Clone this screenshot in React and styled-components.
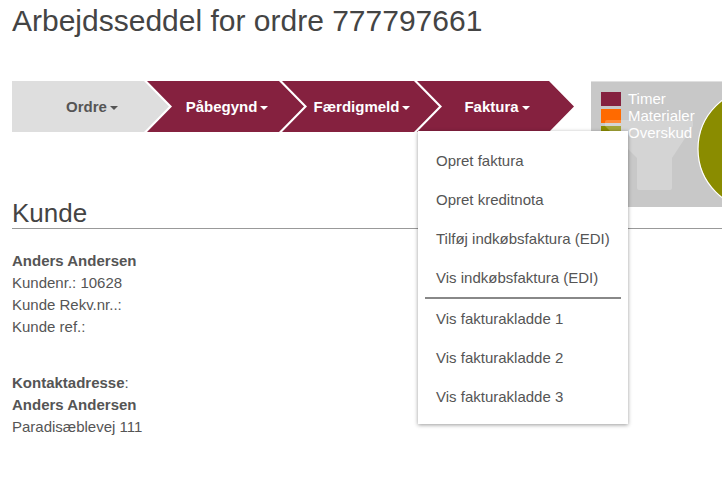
import styled, { createGlobalStyle } from 'styled-components';

const GlobalStyle = createGlobalStyle`
  html, body {
    margin: 0;
    padding: 0;
    overflow: hidden;
    background: #fff;
  }
  body {
    font-family: 'Liberation Sans', Arial, sans-serif;
    color: #555;
  }
`;

const Page = styled.div`
  padding: 4px 0 40px 12px;
`;

const Title = styled.h1`
  margin: 0;
  font-size: 30px;
  line-height: 34px;
  font-weight: normal;
  color: #444;
`;

const ProcessRow = styled.div`
  display: flex;
  align-items: flex-start;
  height: 51px;
  margin-top: 43px;
`;

const Steps = styled.div`
  display: flex;
  flex-shrink: 0;
`;

const StepItem = styled.div`
  position: relative;
  margin-left: ${(p) => (p.$first ? 0 : -25)}px;
`;

const StepShape = styled.div`
  width: 160px;
  height: 51px;
  display: flex;
  align-items: center;
  justify-content: center;
  gap: 3px;
  font-size: 15px;
  font-weight: bold;
  background: ${(p) => (p.$active ? '#85213f' : '#dedede')};
  color: ${(p) => (p.$active ? '#fff' : '#555')};
  clip-path: ${(p) =>
    p.$first
      ? 'polygon(0 0, calc(100% - 28px) 0, calc(100% - 3px) 50%, calc(100% - 28px) 100%, 0 100%)'
      : 'polygon(0 0, calc(100% - 28px) 0, calc(100% - 3px) 50%, calc(100% - 28px) 100%, 0 100%, 25px 50%)'};
`;

const Caret = styled.span`
  display: inline-block;
  width: 0;
  height: 0;
  margin-top: 2px;
  border-left: 4px solid transparent;
  border-right: 4px solid transparent;
  border-top: 4px solid currentColor;
`;

const Menu = styled.div`
  position: absolute;
  top: 50px;
  left: 1px;
  z-index: 10;
  width: 210px;
  padding: 10px 0 8px;
  background: #fff;
  box-shadow: 0 1px 4px rgba(0, 0, 0, 0.4);
`;

const MenuItem = styled.div`
  height: 39px;
  display: flex;
  align-items: center;
  padding: 0 18px;
  font-size: 15px;
  color: #555;
  white-space: nowrap;
`;

const MenuDivider = styled.div`
  height: 2px;
  margin: 0 7px;
  background: #888;
`;

const StatsPanel = styled.div`
  position: relative;
  flex-shrink: 0;
  display: flex;
  width: 200px;
  height: 126px;
  margin-left: 14px;
  padding: 10px 0 0 10px;
  box-sizing: border-box;
  background: #c8c8c8;
  border-top: 1px solid #e0e0e0;
`;

const Legend = styled.div`
  width: 96px;
  flex-shrink: 0;
  display: flex;
  flex-direction: column;
  gap: 3px;
`;

const LegendRow = styled.div`
  display: flex;
  align-items: center;
  gap: 7px;
  height: 14px;
  font-size: 15px;
  line-height: 14px;
  color: #fff;
`;

const Swatch = styled.span`
  width: 20px;
  height: 14px;
  flex-shrink: 0;
  background: ${(p) => p.$color};
`;

const Pie = styled.svg`
  flex-shrink: 0;
  margin-top: -5px;
`;

const Funnel = styled.svg`
  position: absolute;
  left: 14px;
  top: 38px;
`;

const Section = styled.section`
  margin-top: 66px;
`;

const SectionTitle = styled.h2`
  margin: 0;
  font-size: 26px;
  line-height: 30px;
  font-weight: normal;
  color: #444;
  border-bottom: 1px solid #999;
`;

const InfoBlock = styled.div`
  margin-top: ${(p) => p.$gap}px;
  font-size: 15px;
  line-height: 22px;
  color: #555;
`;

const Strong = styled.span`
  font-weight: bold;
`;

const steps = [
  { label: 'Ordre', active: false },
  { label: 'Påbegynd', active: true },
  { label: 'Færdigmeld', active: true },
  { label: 'Faktura', active: true, open: true },
];

const menuItems = [
  ['Opret faktura', 'Opret kreditnota', 'Tilføj indkøbsfaktura (EDI)', 'Vis indkøbsfaktura (EDI)'],
  ['Vis fakturakladde 1', 'Vis fakturakladde 2', 'Vis fakturakladde 3'],
];

const legend = [
  { label: 'Timer', color: '#85213f' },
  { label: 'Materialer', color: '#ff6a00' },
  { label: 'Overskud', color: '#8a8c00' },
];

export default function App() {
  return (
    <>
      <GlobalStyle />
      <Page>
        <Title>Arbejdsseddel for ordre 777797661</Title>

        <ProcessRow>
          <Steps>
            {steps.map((s, i) => (
              <StepItem key={s.label} $first={i === 0}>
                <StepShape $first={i === 0} $active={s.active}>
                  {s.label}
                  <Caret />
                </StepShape>
                {s.open && (
                  <Menu>
                    {menuItems[0].map((m) => (
                      <MenuItem key={m}>{m}</MenuItem>
                    ))}
                    <MenuDivider />
                    {menuItems[1].map((m) => (
                      <MenuItem key={m}>{m}</MenuItem>
                    ))}
                  </Menu>
                )}
              </StepItem>
            ))}
          </Steps>

          <StatsPanel>
            <Legend>
              {legend.map((l) => (
                <LegendRow key={l.label}>
                  <Swatch $color={l.color} />
                  {l.label}
                </LegendRow>
              ))}
            </Legend>
            <Pie width="124" height="124" viewBox="0 0 124 124">
              <circle cx="62" cy="62" r="61" fill="#8a8c00" stroke="#fff" strokeWidth="1.2" />
            </Pie>
            <Funnel width="88" height="70" viewBox="0 0 88 70">
              <path
                d="M2 0 H86 Q88 0 88 2 V6 L67 38 V68 Q67 70 65 70 H34 Q32 70 32 68 V38 L0 6 V2 Q0 0 2 0 Z"
                fill="rgba(255,255,255,0.22)"
              />
            </Funnel>
          </StatsPanel>
        </ProcessRow>

        <Section>
          <SectionTitle>Kunde</SectionTitle>
          <InfoBlock $gap={21}>
            <Strong>Anders Andersen</Strong>
            <br />
            Kundenr.: 10628
            <br />
            Kunde Rekv.nr..:
            <br />
            Kunde ref.:
          </InfoBlock>
          <InfoBlock $gap={34}>
            <Strong>Kontaktadresse</Strong>:
            <br />
            <Strong>Anders Andersen</Strong>
            <br />
            Paradisæblevej 111
          </InfoBlock>
        </Section>
      </Page>
    </>
  );
}
